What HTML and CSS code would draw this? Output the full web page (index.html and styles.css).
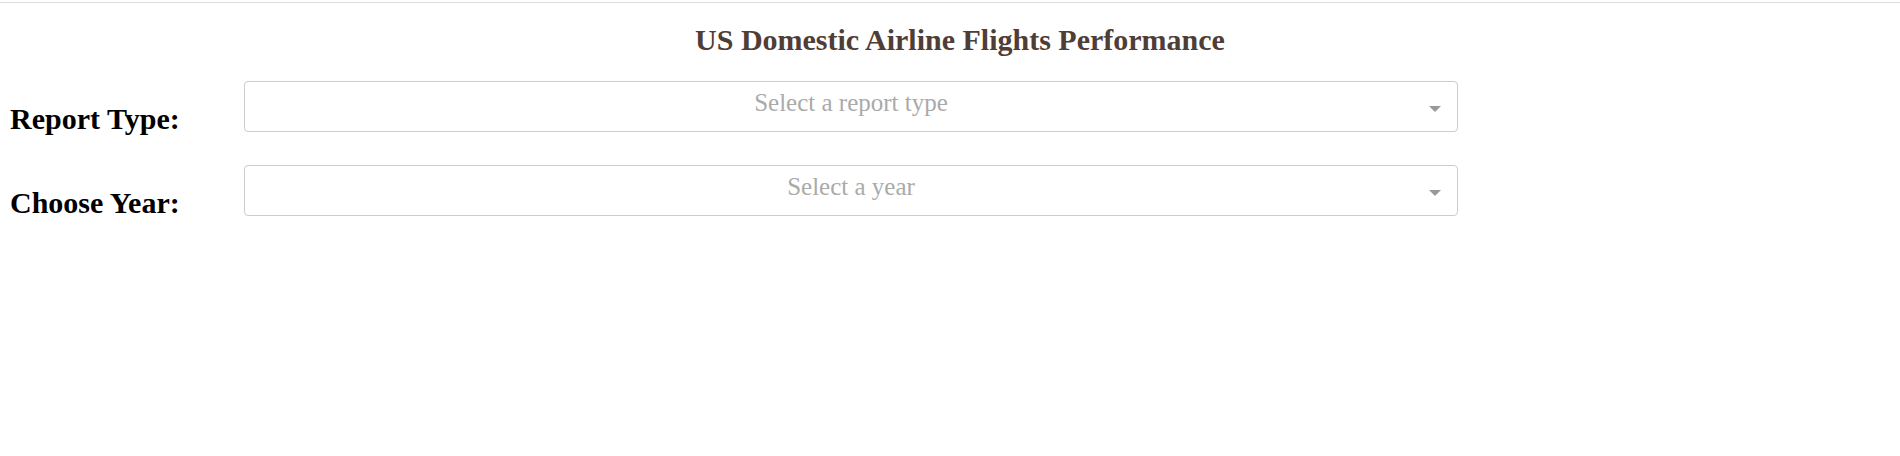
FILE: index.html
```html
<!DOCTYPE html>
<html>
<head>
<meta charset="utf-8">
<title>US Domestic Airline Flights Performance</title>
<link rel="stylesheet" href="styles.css">
</head>
<body>
<div class="topline"></div>
<div class="page">
  <h1 class="title">US Domestic Airline Flights Performance</h1>
  <div class="row">
    <div class="label-col"><h2 class="label">Report Type:</h2></div>
    <div class="dropdown-wrap">
      <div class="dropdown">
        <div class="placeholder">Select a report type</div>
        <div class="arrow-zone"><span class="arrow"></span></div>
      </div>
    </div>
  </div>
  <div class="row">
    <div class="label-col"><h2 class="label">Choose Year:</h2></div>
    <div class="dropdown-wrap">
      <div class="dropdown">
        <div class="placeholder">Select a year</div>
        <div class="arrow-zone"><span class="arrow"></span></div>
      </div>
    </div>
  </div>
</div>
</body>
</html>
```
FILE: styles.css
```css
html, body {
  margin: 0;
  padding: 0;
  background: #ffffff;
}
body {
  font-family: "Liberation Serif", "Times New Roman", serif;
}
.topline {
  height: 1px;
  margin-top: 2px;
  background: #dcdcdc;
}
.page {
  padding: 0 10px;
}
.title {
  margin: 20px 0;
  padding-left: 20px;
  font-size: 30px;
  line-height: 34px;
  font-weight: bold;
  text-align: center;
  color: #503D36;
}
.row {
  display: flex;
  align-items: flex-start;
}
.label-col {
  width: 230px;
  flex: none;
}
.label {
  margin: 25px 0;
  font-size: 30px;
  line-height: 34px;
  font-weight: bold;
  color: #000;
}
.dropdown-wrap {
  padding: 4px;
}
.dropdown {
  width: 1212px;
  height: 49px;
  border: 1px solid #cccccc;
  border-radius: 4px;
  display: flex;
  align-items: flex-start;
  background: #fff;
}
.placeholder {
  flex: 1;
  padding-left: 30px;
  font-size: 25px;
  line-height: 42px;
  color: #aaaaaa;
  text-align: center;
}
.arrow-zone {
  width: 30px;
  flex: none;
  padding-top: 24px;
  padding-left: 2px;
  box-sizing: border-box;
}
.arrow {
  display: block;
  width: 0;
  height: 0;
  border-top: 6px solid #999999;
  border-left: 6.5px solid transparent;
  border-right: 6.5px solid transparent;
}
```
